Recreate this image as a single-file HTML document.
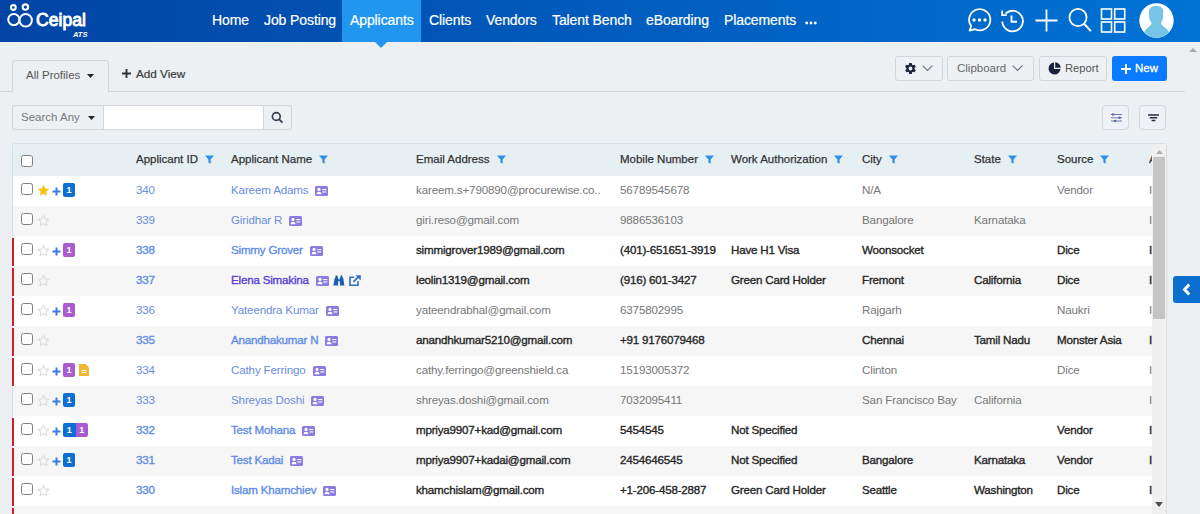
<!DOCTYPE html>
<html><head><meta charset="utf-8">
<style>
*{box-sizing:border-box;margin:0;padding:0}
html,body{width:1200px;height:514px;overflow:hidden}
body{position:relative;background:#ecf0f3;font-family:"Liberation Sans",sans-serif;color:#333}
.abs{position:absolute}
#nav{position:absolute;left:0;top:0;width:1200px;height:42px;background:linear-gradient(90deg,#0244a4 0%,#0073d5 100%)}
#nav .it{position:absolute;top:0;height:42px;line-height:40px;color:#fff;font-size:14px;letter-spacing:-0.1px;-webkit-text-stroke:0.2px currentColor;white-space:nowrap}
#nav .act{position:absolute;left:342px;top:0;width:79px;height:42px;background:#2196ef}
#nav .arrow{position:absolute;left:375px;top:42px;width:0;height:0;border-left:6px solid transparent;border-right:6px solid transparent;border-top:6px solid #2196ef}
.tab{position:absolute;left:12px;top:60px;width:97px;height:32px;border:1px solid #d3d7db;border-bottom:none;border-radius:4px 4px 0 0;background:#ecf0f3}
.hline{position:absolute;left:0;top:91px;width:1185px;height:1px;background:#d3d7db}
.btn{position:absolute;top:56px;height:25px;border:1px solid #d3d6da;border-radius:3px;background:#eef1f4;font-size:12px;color:#555;white-space:nowrap}
.ibtn{position:absolute;top:105px;width:27px;height:25px;border:1px solid #d3d6da;border-radius:4px;background:#eef1f5}
.search{position:absolute;left:12px;top:105px;width:280px;height:25px;border:1px solid #d3d6da;border-radius:3px;background:#fff}
#tbl{position:absolute;left:12px;top:143px;width:1155px;height:380px;border:1px solid #d5dfe8;border-radius:3px;background:#fff}
#thead{position:absolute;left:0;top:0;width:1153px;height:32px;background:#e6f0f3;border-radius:3px 3px 0 0}
.hc{position:absolute;top:0;height:32px;line-height:33px;font-size:11.5px;font-weight:400;color:#333;-webkit-text-stroke:0.25px currentColor;white-space:nowrap}
.hc .filt{position:absolute;right:-16px;top:12px}
.row{position:absolute;left:0;width:1166px;height:30px}
.row::before{content:"";position:absolute;left:13px;top:0;right:0;bottom:0;background:var(--bg)}
.redbar{position:absolute;left:12px;top:2px;width:2px;height:28px;background:#d02029}
.cb{position:absolute;left:21px;top:7px;width:12px;height:12px;border:1.5px solid #808080;border-radius:2.5px;background:#fff}
.star{position:absolute;left:36.5px;top:8px;width:13px;height:13px}
.star svg,.plus svg,.doc svg,.ic svg{display:block}
.plus{position:absolute;left:52px;top:10.5px}
.badge{position:absolute;top:7px;width:12px;height:14px;border-radius:2px;color:#fff;font-size:9px;font-weight:700;text-align:center;line-height:14px}
.badge2{position:absolute;left:63px;top:7px;height:14px;border-radius:2px;overflow:hidden;display:flex}
.badge2 span{display:block;width:12.5px;height:14px;color:#fff;font-size:9px;font-weight:700;text-align:center;line-height:14px}
.doc{position:absolute;top:8px}
.c{position:absolute;top:0;height:30px;line-height:28px;white-space:nowrap}
.ic{display:inline-block;vertical-align:middle;margin-left:7px;position:relative;top:0px}
.rl .c{font-size:11.6px;color:#777;letter-spacing:-0.15px}
.rl .id,.rl .name{color:#6a8de2}
.rd .c{font-size:11.6px;font-weight:400;color:#262626;letter-spacing:-0.2px;-webkit-text-stroke:0.35px currentColor}
.rd .id,.rd .name{color:#5f8ce8}
.rd .name.vis{color:#5a3ed8}
.extra{width:3px;overflow:hidden}
#vscroll{position:absolute;left:1152px;top:144px;width:14px;height:370px;background:#f1f1f1}
</style></head><body>

<div id="nav">
  <svg class="abs" style="left:6px;top:3px" width="90" height="36" viewBox="0 0 90 36">
    <circle cx="7.3" cy="4.5" r="2.4" fill="none" stroke="#fff" stroke-width="2.1"/>
    <circle cx="19.4" cy="4.1" r="2.7" fill="none" stroke="#fff" stroke-width="2.1"/>
    <circle cx="7.8" cy="16.6" r="5.6" fill="none" stroke="#fff" stroke-width="2"/>
    <circle cx="19.7" cy="17.3" r="6.2" fill="none" stroke="#fff" stroke-width="2"/>
    <text x="30" y="22.8" font-family="Liberation Sans" font-weight="400" font-size="17.6" fill="#fff" stroke="#fff" stroke-width="0.9">Ceipal</text>
    <text x="67" y="33.5" font-family="Liberation Sans" font-weight="700" font-style="italic" font-size="7.5" fill="#fff">ATS</text>
  </svg>
  <div class="act"></div>
  <div class="it" style="left:212px">Home</div>
  <div class="it" style="left:264px">Job Posting</div>
  <div class="it" style="left:350px">Applicants</div>
  <div class="it" style="left:429px">Clients</div>
  <div class="it" style="left:486px">Vendors</div>
  <div class="it" style="left:552px">Talent Bench</div>
  <div class="it" style="left:646px">eBoarding</div>
  <div class="it" style="left:724px">Placements</div>
  <svg class="abs" style="left:805px;top:21px" width="12" height="4" viewBox="0 0 12 4"><circle cx="1.7" cy="2" r="1.4" fill="#fff"/><circle cx="6" cy="2" r="1.4" fill="#fff"/><circle cx="10.3" cy="2" r="1.4" fill="#fff"/></svg>
  <!-- right icons -->
  <svg class="abs" style="left:966px;top:7px" width="27" height="27" viewBox="0 0 27 27">
    <path d="M3.6 23.6l1.6-4.6A10.6 10.6 0 1 1 9 22.2z" fill="none" stroke="#fff" stroke-width="1.8" stroke-linejoin="round"/>
    <circle cx="8" cy="13" r="1.7" fill="#fff"/><circle cx="13.5" cy="13" r="1.7" fill="#fff"/><circle cx="19" cy="13" r="1.7" fill="#fff"/>
  </svg>
  <svg class="abs" style="left:999px;top:7px" width="27" height="27" viewBox="0 0 27 27">
    <path d="M3.3 14.5A10.3 10.3 0 1 0 6.6 6.5" fill="none" stroke="#fff" stroke-width="1.8"/>
    <path d="M3.2 3.5v4.6h4.6" fill="none" stroke="#fff" stroke-width="1.8"/>
    <path d="M12.5 8.5v6.2h5.5" fill="none" stroke="#fff" stroke-width="1.9"/>
  </svg>
  <svg class="abs" style="left:1035px;top:9px" width="23" height="23" viewBox="0 0 23 23"><path d="M11.5 0.5v22M0.5 11.5h22" stroke="#fff" stroke-width="1.8"/></svg>
  <svg class="abs" style="left:1068px;top:7px" width="25" height="26" viewBox="0 0 25 26"><circle cx="10" cy="10.5" r="8.6" fill="none" stroke="#fff" stroke-width="1.8"/><path d="M16.3 17l6.6 7.2" stroke="#fff" stroke-width="1.9"/></svg>
  <svg class="abs" style="left:1100px;top:8px" width="27" height="26" viewBox="0 0 27 26">
    <rect x="1.5" y="1" width="10" height="10" fill="none" stroke="#fff" stroke-width="1.6"/>
    <rect x="14.7" y="1" width="10" height="10" fill="none" stroke="#fff" stroke-width="1.6"/>
    <rect x="1.5" y="14" width="10" height="10" fill="none" stroke="#fff" stroke-width="1.6"/>
    <rect x="14.7" y="14" width="10" height="10" fill="none" stroke="#fff" stroke-width="1.6"/>
  </svg>
  <svg class="abs" style="left:1139px;top:3px" width="35" height="35" viewBox="0 0 35 35">
    <defs><clipPath id="av"><circle cx="17.5" cy="17.5" r="17.2"/></clipPath></defs>
    <circle cx="17.5" cy="17.5" r="17.2" fill="#fff"/>
    <g clip-path="url(#av)" fill="#76c5e6">
      <path d="M10 8.5C10 4.8 12.8 3 17 3S24.3 4.8 24.3 8.5L24 15C23.8 17 22.8 18.5 22 19.8C22.4 22.4 24.8 23.6 26.6 25C28.8 26.8 30.5 29.5 31.5 35H3.5C4.5 29.5 6.2 26.8 8.4 25C10.2 23.6 12.4 22.4 12.6 19.8C11.8 18.5 10.4 17 10.2 15Z"/>
    </g>
  </svg>
</div>
<div class="arrow" style="position:absolute;left:375px;top:42px;width:0;height:0;border-left:6px solid transparent;border-right:6px solid transparent;border-top:6px solid #2196ef"></div>

<!-- toolbar -->
<div class="hline"></div>
<div class="tab"></div>
<div class="abs" style="left:26px;top:60px;height:31px;line-height:31px;font-size:11.5px;color:#555">All Profiles</div>
<svg class="abs" style="left:87px;top:74px" width="7" height="4" viewBox="0 0 7 4"><path d="M0 0h7L3.5 4z" fill="#222"/></svg>
<svg class="abs" style="left:122px;top:69px" width="9" height="9" viewBox="0 0 9 9"><path d="M4.5 0v9M0 4.5h9" stroke="#333" stroke-width="1.9"/></svg>
<div class="abs" style="left:136px;top:58px;height:31px;line-height:31px;font-size:11.7px;color:#3a3a3a;-webkit-text-stroke:0.2px currentColor">Add View</div>

<div class="btn" style="left:895px;width:48px">
  <svg class="abs" style="left:8px;top:4.5px" width="13" height="13" viewBox="0 0 24 24"><path fill="#1c2340" d="M19.4 13c.04-.33.06-.66.06-1s-.02-.67-.06-1l2.1-1.6c.2-.15.25-.42.12-.64l-2-3.46c-.12-.22-.39-.3-.61-.22l-2.5 1c-.52-.4-1.08-.73-1.7-.98L14.4 2.4A.49.49 0 0 0 13.9 2h-4c-.25 0-.46.18-.49.42L9 5.1c-.61.25-1.17.59-1.7.98l-2.5-1a.5.5 0 0 0-.6.22l-2 3.46c-.13.22-.07.49.12.64L4.5 11c-.04.33-.07.67-.07 1s.03.67.07 1l-2.1 1.6a.5.5 0 0 0-.12.64l2 3.46c.12.22.39.3.6.22l2.5-1c.52.4 1.08.73 1.7.98l.38 2.65c.03.24.24.42.49.42h4c.25 0 .46-.18.49-.42l.38-2.65c.61-.25 1.17-.58 1.7-.98l2.5 1c.22.08.49 0 .61-.22l2-3.46a.5.5 0 0 0-.12-.64zM12 15.5a3.5 3.5 0 1 1 0-7 3.5 3.5 0 0 1 0 7z"/></svg>
  <svg class="abs" style="left:26px;top:8px" width="11" height="7" viewBox="0 0 11 7"><path d="M0.7 0.7L5.5 5.5 10.3 0.7" fill="none" stroke="#6b7280" stroke-width="1.2"/></svg>
</div>
<div class="btn" style="left:947px;width:87px">
  <div class="abs" style="left:9px;top:0;line-height:23px;font-size:11.5px;color:#666">Clipboard</div>
  <svg class="abs" style="left:64px;top:8px" width="11" height="7" viewBox="0 0 11 7"><path d="M0.7 0.7L5.5 5.5 10.3 0.7" fill="none" stroke="#6b7280" stroke-width="1.2"/></svg>
</div>
<div class="btn" style="left:1039px;width:68px">
  <svg class="abs" style="left:8px;top:5px" width="13" height="13" viewBox="0 0 13 13"><path d="M6 0.5A6 6 0 1 0 12.5 7H6z" fill="#1c2340"/><path d="M7.2 0.3v5.5h5.5A5.6 5.6 0 0 0 7.2 0.3z" fill="#1c2340"/></svg>
  <div class="abs" style="left:25px;top:0;line-height:23px;font-size:11.2px;color:#555">Report</div>
</div>
<div class="abs" style="left:1112px;top:56px;width:55px;height:25px;border-radius:3px;background:#0a7aff">
  <svg class="abs" style="left:9px;top:8px" width="10" height="10" viewBox="0 0 10 10"><path d="M5 0v10M0 5h10" stroke="#fff" stroke-width="2"/></svg>
  <div class="abs" style="left:23px;top:0;line-height:25px;font-size:11.5px;color:#fff;-webkit-text-stroke:0.3px currentColor">New</div>
</div>
<svg class="abs" style="left:1189px;top:48px" width="8" height="4" viewBox="0 0 8 4"><path d="M0 4h8L4 0z" fill="#a8a8a8"/></svg>

<!-- search -->
<div class="search"></div>
<div class="abs" style="left:12px;top:105px;width:92px;height:25px;border:1px solid #d3d6da;border-radius:3px 0 0 3px;background:#eef1f4"></div>
<div class="abs" style="left:21px;top:105px;line-height:25px;font-size:11.5px;color:#777">Search Any</div>
<svg class="abs" style="left:88px;top:116px" width="7" height="4" viewBox="0 0 7 4"><path d="M0 0h7L3.5 4z" fill="#222"/></svg>
<div class="abs" style="left:263px;top:105px;width:29px;height:25px;border:1px solid #d3d6da;border-radius:0 3px 3px 0;background:#eef1f4"></div>
<svg class="abs" style="left:271px;top:111px" width="13" height="13" viewBox="0 0 13 13"><circle cx="5.3" cy="5.5" r="3.9" fill="none" stroke="#3a3f55" stroke-width="1.7"/><path d="M8.2 8.4l3.3 3.3" stroke="#3a3f55" stroke-width="1.8"/></svg>

<div class="ibtn" style="left:1102px">
  <svg class="abs" style="left:8px;top:7px" width="11" height="10" viewBox="0 0 11 10"><path d="M0 1.5h11M0 4.8h11M0 8h11" stroke="#5d6bb0" stroke-width="0.9"/><circle cx="2" cy="1.5" r="1.3" fill="#5d6bb0"/><circle cx="8.5" cy="4.8" r="1.3" fill="#5d6bb0"/><circle cx="4" cy="8" r="1.3" fill="#5d6bb0"/></svg>
</div>
<div class="ibtn" style="left:1139px">
  <svg class="abs" style="left:8px;top:8px" width="11" height="8" viewBox="0 0 11 8"><path d="M0 1h11M1.8 3.8h7.4M3.6 6.6h3.8" stroke="#262840" stroke-width="1.5"/></svg>
</div>

<!-- table -->
<div id="tbl">
  <div id="thead">
    <div class="cb" style="left:8px;top:11px"></div>
    <div style="position:absolute;left:-13px;top:-1px"><div class="hc" style="left:136px">Applicant ID<svg class="filt" width="9" height="9" viewBox="0 0 9 9"><path d="M0 0.5h9L5.6 4.6V8.8L3.4 7.6V4.6z" fill="#2d8ee8"/></svg></div><div class="hc" style="left:231px">Applicant Name<svg class="filt" width="9" height="9" viewBox="0 0 9 9"><path d="M0 0.5h9L5.6 4.6V8.8L3.4 7.6V4.6z" fill="#2d8ee8"/></svg></div><div class="hc" style="left:416px">Email Address<svg class="filt" width="9" height="9" viewBox="0 0 9 9"><path d="M0 0.5h9L5.6 4.6V8.8L3.4 7.6V4.6z" fill="#2d8ee8"/></svg></div><div class="hc" style="left:620px">Mobile Number<svg class="filt" width="9" height="9" viewBox="0 0 9 9"><path d="M0 0.5h9L5.6 4.6V8.8L3.4 7.6V4.6z" fill="#2d8ee8"/></svg></div><div class="hc" style="left:731px">Work Authorization<svg class="filt" width="9" height="9" viewBox="0 0 9 9"><path d="M0 0.5h9L5.6 4.6V8.8L3.4 7.6V4.6z" fill="#2d8ee8"/></svg></div><div class="hc" style="left:862px">City<svg class="filt" width="9" height="9" viewBox="0 0 9 9"><path d="M0 0.5h9L5.6 4.6V8.8L3.4 7.6V4.6z" fill="#2d8ee8"/></svg></div><div class="hc" style="left:974px">State<svg class="filt" width="9" height="9" viewBox="0 0 9 9"><path d="M0 0.5h9L5.6 4.6V8.8L3.4 7.6V4.6z" fill="#2d8ee8"/></svg></div><div class="hc" style="left:1057px">Source<svg class="filt" width="9" height="9" viewBox="0 0 9 9"><path d="M0 0.5h9L5.6 4.6V8.8L3.4 7.6V4.6z" fill="#2d8ee8"/></svg></div><div class="hc" style="left:1149px;width:3px;overflow:hidden">A</div></div>
  </div>
  <div style="position:absolute;left:-13px;top:-144px;width:1167px;height:700px">
  <div class="row rl" style="top:176px;--bg:#ffffff"><div class="cb"></div><div class="star"><svg width="13" height="13" viewBox="0 0 24 24"><path d="M12 1.5l3.2 6.9 7.4.8-5.5 5 1.5 7.3L12 17.8 5.4 21.5l1.5-7.3-5.5-5 7.4-.8z" fill="#f6c416"/></svg></div><div class="plus"><svg width="9" height="9" viewBox="0 0 9 9"><path d="M4.5 0.5v8M0.5 4.5h8" stroke="#3b7be0" stroke-width="2"/></svg></div><div class="badge" style="left:63px;background:#0b6fd4">1</div><div class="c id" style="left:136px">340</div><div class="c name" style="left:231px">Kareem Adams<span class="ic"><svg width="13" height="10" viewBox="0 0 13 10"><rect x="0" y="0" width="13" height="10" rx="1.5" fill="#8a7be2"/><circle cx="4" cy="3.4" r="1.6" fill="#fff"/><path d="M1.6 8.2c0-1.6 1.1-2.4 2.4-2.4s2.4.8 2.4 2.4z" fill="#fff"/><rect x="7.3" y="3" width="4" height="1.1" fill="#fff"/><rect x="7.3" y="5.4" width="4" height="1.1" fill="#fff"/></svg></span></div><div class="c t" style="left:416px">kareem.s+790890@procurewise.co..</div><div class="c t" style="left:620px">56789545678</div><div class="c t" style="left:862px">N/A</div><div class="c t" style="left:1057px">Vendor</div><div class="c t extra" style="left:1149px">I</div></div>
<div class="row rl" style="top:206px;--bg:#f6f6f6"><div class="cb"></div><div class="star"><svg width="13" height="13" viewBox="0 0 24 24"><path d="M12 2.5l3 6.5 7 .8-5.2 4.8 1.4 6.9L12 18 5.8 21.5l1.4-6.9L2 9.8l7-.8z" fill="none" stroke="#dcdcdc" stroke-width="2" stroke-linejoin="round"/></svg></div><div class="c id" style="left:136px">339</div><div class="c name" style="left:231px">Giridhar R<span class="ic"><svg width="13" height="10" viewBox="0 0 13 10"><rect x="0" y="0" width="13" height="10" rx="1.5" fill="#8a7be2"/><circle cx="4" cy="3.4" r="1.6" fill="#fff"/><path d="M1.6 8.2c0-1.6 1.1-2.4 2.4-2.4s2.4.8 2.4 2.4z" fill="#fff"/><rect x="7.3" y="3" width="4" height="1.1" fill="#fff"/><rect x="7.3" y="5.4" width="4" height="1.1" fill="#fff"/></svg></span></div><div class="c t" style="left:416px">giri.reso@gmail.com</div><div class="c t" style="left:620px">9886536103</div><div class="c t" style="left:862px">Bangalore</div><div class="c t" style="left:974px">Karnataka</div><div class="c t extra" style="left:1149px">I</div></div>
<div class="row rd" style="top:236px;--bg:#ffffff"><div class="redbar"></div><div class="cb"></div><div class="star"><svg width="13" height="13" viewBox="0 0 24 24"><path d="M12 2.5l3 6.5 7 .8-5.2 4.8 1.4 6.9L12 18 5.8 21.5l1.4-6.9L2 9.8l7-.8z" fill="none" stroke="#dcdcdc" stroke-width="2" stroke-linejoin="round"/></svg></div><div class="plus"><svg width="9" height="9" viewBox="0 0 9 9"><path d="M4.5 0.5v8M0.5 4.5h8" stroke="#3b7be0" stroke-width="2"/></svg></div><div class="badge" style="left:63px;background:#a95bd0">1</div><div class="c id" style="left:136px">338</div><div class="c name" style="left:231px">Simmy Grover<span class="ic"><svg width="13" height="10" viewBox="0 0 13 10"><rect x="0" y="0" width="13" height="10" rx="1.5" fill="#8a7be2"/><circle cx="4" cy="3.4" r="1.6" fill="#fff"/><path d="M1.6 8.2c0-1.6 1.1-2.4 2.4-2.4s2.4.8 2.4 2.4z" fill="#fff"/><rect x="7.3" y="3" width="4" height="1.1" fill="#fff"/><rect x="7.3" y="5.4" width="4" height="1.1" fill="#fff"/></svg></span></div><div class="c t" style="left:416px">simmigrover1989@gmail.com</div><div class="c t" style="left:620px">(401)-651651-3919</div><div class="c t" style="left:731px">Have H1 Visa</div><div class="c t" style="left:862px">Woonsocket</div><div class="c t" style="left:1057px">Dice</div><div class="c t extra" style="left:1149px">I</div></div>
<div class="row rd" style="top:266px;--bg:#f6f6f6"><div class="redbar"></div><div class="cb"></div><div class="star"><svg width="13" height="13" viewBox="0 0 24 24"><path d="M12 2.5l3 6.5 7 .8-5.2 4.8 1.4 6.9L12 18 5.8 21.5l1.4-6.9L2 9.8l7-.8z" fill="none" stroke="#dcdcdc" stroke-width="2" stroke-linejoin="round"/></svg></div><div class="c id" style="left:136px">337</div><div class="c name vis" style="left:231px">Elena Simakina<span class="ic"><svg width="13" height="10" viewBox="0 0 13 10"><rect x="0" y="0" width="13" height="10" rx="1.5" fill="#8a7be2"/><circle cx="4" cy="3.4" r="1.6" fill="#fff"/><path d="M1.6 8.2c0-1.6 1.1-2.4 2.4-2.4s2.4.8 2.4 2.4z" fill="#fff"/><rect x="7.3" y="3" width="4" height="1.1" fill="#fff"/><rect x="7.3" y="5.4" width="4" height="1.1" fill="#fff"/></svg></span><span class="ic" style="margin-left:4px"><svg width="12" height="11" viewBox="0 0 12 11"><path d="M2.6 0.6h1.9v1.6l0.6 0.4v7.9H0.4L1.6 3.4l0.8-0.8z M7.5 0.6h1.9v1.6l0.8 0.8 1.2 7.4H6.9V2.6l0.6-0.4z M5 4.2h2v2H5z" fill="#1b5fb4"/></svg></span><span class="ic" style="margin-left:4px"><svg width="12" height="11" viewBox="0 0 12 11"><path d="M5.2 2.3H1v7.9h7.9V6.2" fill="none" stroke="#2f6cc4" stroke-width="1.6"/><path d="M4.4 6.8L10 1.2" fill="none" stroke="#2f6cc4" stroke-width="1.7"/><path d="M6.6 0.2h5.2v5.2z" fill="#2f6cc4"/></svg></span></div><div class="c t" style="left:416px">leolin1319@gmail.com</div><div class="c t" style="left:620px">(916) 601-3427</div><div class="c t" style="left:731px">Green Card Holder</div><div class="c t" style="left:862px">Fremont</div><div class="c t" style="left:974px">California</div><div class="c t" style="left:1057px">Dice</div><div class="c t extra" style="left:1149px">I</div></div>
<div class="row rl" style="top:296px;--bg:#ffffff"><div class="redbar"></div><div class="cb"></div><div class="star"><svg width="13" height="13" viewBox="0 0 24 24"><path d="M12 2.5l3 6.5 7 .8-5.2 4.8 1.4 6.9L12 18 5.8 21.5l1.4-6.9L2 9.8l7-.8z" fill="none" stroke="#dcdcdc" stroke-width="2" stroke-linejoin="round"/></svg></div><div class="plus"><svg width="9" height="9" viewBox="0 0 9 9"><path d="M4.5 0.5v8M0.5 4.5h8" stroke="#3b7be0" stroke-width="2"/></svg></div><div class="badge" style="left:63px;background:#a95bd0">1</div><div class="c id" style="left:136px">336</div><div class="c name" style="left:231px">Yateendra Kumar<span class="ic"><svg width="13" height="10" viewBox="0 0 13 10"><rect x="0" y="0" width="13" height="10" rx="1.5" fill="#8a7be2"/><circle cx="4" cy="3.4" r="1.6" fill="#fff"/><path d="M1.6 8.2c0-1.6 1.1-2.4 2.4-2.4s2.4.8 2.4 2.4z" fill="#fff"/><rect x="7.3" y="3" width="4" height="1.1" fill="#fff"/><rect x="7.3" y="5.4" width="4" height="1.1" fill="#fff"/></svg></span></div><div class="c t" style="left:416px">yateendrabhal@gmail.com</div><div class="c t" style="left:620px">6375802995</div><div class="c t" style="left:862px">Rajgarh</div><div class="c t" style="left:1057px">Naukri</div><div class="c t extra" style="left:1149px">I</div></div>
<div class="row rd" style="top:326px;--bg:#f6f6f6"><div class="redbar"></div><div class="cb"></div><div class="star"><svg width="13" height="13" viewBox="0 0 24 24"><path d="M12 2.5l3 6.5 7 .8-5.2 4.8 1.4 6.9L12 18 5.8 21.5l1.4-6.9L2 9.8l7-.8z" fill="none" stroke="#dcdcdc" stroke-width="2" stroke-linejoin="round"/></svg></div><div class="c id" style="left:136px">335</div><div class="c name" style="left:231px">Anandhakumar N<span class="ic"><svg width="13" height="10" viewBox="0 0 13 10"><rect x="0" y="0" width="13" height="10" rx="1.5" fill="#8a7be2"/><circle cx="4" cy="3.4" r="1.6" fill="#fff"/><path d="M1.6 8.2c0-1.6 1.1-2.4 2.4-2.4s2.4.8 2.4 2.4z" fill="#fff"/><rect x="7.3" y="3" width="4" height="1.1" fill="#fff"/><rect x="7.3" y="5.4" width="4" height="1.1" fill="#fff"/></svg></span></div><div class="c t" style="left:416px">anandhkumar5210@gmail.com</div><div class="c t" style="left:620px">+91 9176079468</div><div class="c t" style="left:862px">Chennai</div><div class="c t" style="left:974px">Tamil Nadu</div><div class="c t" style="left:1057px">Monster Asia</div><div class="c t extra" style="left:1149px">I</div></div>
<div class="row rl" style="top:356px;--bg:#ffffff"><div class="redbar"></div><div class="cb"></div><div class="star"><svg width="13" height="13" viewBox="0 0 24 24"><path d="M12 2.5l3 6.5 7 .8-5.2 4.8 1.4 6.9L12 18 5.8 21.5l1.4-6.9L2 9.8l7-.8z" fill="none" stroke="#dcdcdc" stroke-width="2" stroke-linejoin="round"/></svg></div><div class="plus"><svg width="9" height="9" viewBox="0 0 9 9"><path d="M4.5 0.5v8M0.5 4.5h8" stroke="#3b7be0" stroke-width="2"/></svg></div><div class="badge" style="left:63px;background:#a95bd0">1</div><div class="doc" style="left:79px"><svg width="10" height="12" viewBox="0 0 10 12"><path d="M0 0h6.5L10 3.5V12H0z" fill="#f2b630"/><rect x="2.5" y="6" width="5" height="1" fill="#fff"/><rect x="2.5" y="8" width="5" height="1" fill="#fff"/></svg></div><div class="c id" style="left:136px">334</div><div class="c name" style="left:231px">Cathy Ferringo<span class="ic"><svg width="13" height="10" viewBox="0 0 13 10"><rect x="0" y="0" width="13" height="10" rx="1.5" fill="#8a7be2"/><circle cx="4" cy="3.4" r="1.6" fill="#fff"/><path d="M1.6 8.2c0-1.6 1.1-2.4 2.4-2.4s2.4.8 2.4 2.4z" fill="#fff"/><rect x="7.3" y="3" width="4" height="1.1" fill="#fff"/><rect x="7.3" y="5.4" width="4" height="1.1" fill="#fff"/></svg></span></div><div class="c t" style="left:416px">cathy.ferringo@greenshield.ca</div><div class="c t" style="left:620px">15193005372</div><div class="c t" style="left:862px">Clinton</div><div class="c t" style="left:1057px">Dice</div><div class="c t extra" style="left:1149px">I</div></div>
<div class="row rl" style="top:386px;--bg:#f6f6f6"><div class="cb"></div><div class="star"><svg width="13" height="13" viewBox="0 0 24 24"><path d="M12 2.5l3 6.5 7 .8-5.2 4.8 1.4 6.9L12 18 5.8 21.5l1.4-6.9L2 9.8l7-.8z" fill="none" stroke="#dcdcdc" stroke-width="2" stroke-linejoin="round"/></svg></div><div class="plus"><svg width="9" height="9" viewBox="0 0 9 9"><path d="M4.5 0.5v8M0.5 4.5h8" stroke="#3b7be0" stroke-width="2"/></svg></div><div class="badge" style="left:63px;background:#0b6fd4">1</div><div class="c id" style="left:136px">333</div><div class="c name" style="left:231px">Shreyas Doshi<span class="ic"><svg width="13" height="10" viewBox="0 0 13 10"><rect x="0" y="0" width="13" height="10" rx="1.5" fill="#8a7be2"/><circle cx="4" cy="3.4" r="1.6" fill="#fff"/><path d="M1.6 8.2c0-1.6 1.1-2.4 2.4-2.4s2.4.8 2.4 2.4z" fill="#fff"/><rect x="7.3" y="3" width="4" height="1.1" fill="#fff"/><rect x="7.3" y="5.4" width="4" height="1.1" fill="#fff"/></svg></span></div><div class="c t" style="left:416px">shreyas.doshi@gmail.com</div><div class="c t" style="left:620px">7032095411</div><div class="c t" style="left:862px">San Francisco Bay</div><div class="c t" style="left:974px">California</div><div class="c t extra" style="left:1149px">I</div></div>
<div class="row rd" style="top:416px;--bg:#ffffff"><div class="redbar"></div><div class="cb"></div><div class="star"><svg width="13" height="13" viewBox="0 0 24 24"><path d="M12 2.5l3 6.5 7 .8-5.2 4.8 1.4 6.9L12 18 5.8 21.5l1.4-6.9L2 9.8l7-.8z" fill="none" stroke="#dcdcdc" stroke-width="2" stroke-linejoin="round"/></svg></div><div class="plus"><svg width="9" height="9" viewBox="0 0 9 9"><path d="M4.5 0.5v8M0.5 4.5h8" stroke="#3b7be0" stroke-width="2"/></svg></div><div class="badge2"><span style="background:#0b6fd4">1</span><span style="background:#a95bd0">1</span></div><div class="c id" style="left:136px">332</div><div class="c name" style="left:231px">Test Mohana<span class="ic"><svg width="13" height="10" viewBox="0 0 13 10"><rect x="0" y="0" width="13" height="10" rx="1.5" fill="#8a7be2"/><circle cx="4" cy="3.4" r="1.6" fill="#fff"/><path d="M1.6 8.2c0-1.6 1.1-2.4 2.4-2.4s2.4.8 2.4 2.4z" fill="#fff"/><rect x="7.3" y="3" width="4" height="1.1" fill="#fff"/><rect x="7.3" y="5.4" width="4" height="1.1" fill="#fff"/></svg></span></div><div class="c t" style="left:416px">mpriya9907+kad@gmail.com</div><div class="c t" style="left:620px">5454545</div><div class="c t" style="left:731px">Not Specified</div><div class="c t" style="left:1057px">Vendor</div><div class="c t extra" style="left:1149px">I</div></div>
<div class="row rd" style="top:446px;--bg:#f6f6f6"><div class="redbar"></div><div class="cb"></div><div class="star"><svg width="13" height="13" viewBox="0 0 24 24"><path d="M12 2.5l3 6.5 7 .8-5.2 4.8 1.4 6.9L12 18 5.8 21.5l1.4-6.9L2 9.8l7-.8z" fill="none" stroke="#dcdcdc" stroke-width="2" stroke-linejoin="round"/></svg></div><div class="plus"><svg width="9" height="9" viewBox="0 0 9 9"><path d="M4.5 0.5v8M0.5 4.5h8" stroke="#3b7be0" stroke-width="2"/></svg></div><div class="badge" style="left:63px;background:#0b6fd4">1</div><div class="c id" style="left:136px">331</div><div class="c name" style="left:231px">Test Kadai<span class="ic"><svg width="13" height="10" viewBox="0 0 13 10"><rect x="0" y="0" width="13" height="10" rx="1.5" fill="#8a7be2"/><circle cx="4" cy="3.4" r="1.6" fill="#fff"/><path d="M1.6 8.2c0-1.6 1.1-2.4 2.4-2.4s2.4.8 2.4 2.4z" fill="#fff"/><rect x="7.3" y="3" width="4" height="1.1" fill="#fff"/><rect x="7.3" y="5.4" width="4" height="1.1" fill="#fff"/></svg></span></div><div class="c t" style="left:416px">mpriya9907+kadai@gmail.com</div><div class="c t" style="left:620px">2454646545</div><div class="c t" style="left:731px">Not Specified</div><div class="c t" style="left:862px">Bangalore</div><div class="c t" style="left:974px">Karnataka</div><div class="c t" style="left:1057px">Vendor</div><div class="c t extra" style="left:1149px">I</div></div>
<div class="row rd" style="top:476px;--bg:#ffffff"><div class="redbar"></div><div class="cb"></div><div class="star"><svg width="13" height="13" viewBox="0 0 24 24"><path d="M12 2.5l3 6.5 7 .8-5.2 4.8 1.4 6.9L12 18 5.8 21.5l1.4-6.9L2 9.8l7-.8z" fill="none" stroke="#dcdcdc" stroke-width="2" stroke-linejoin="round"/></svg></div><div class="c id" style="left:136px">330</div><div class="c name" style="left:231px">Islam Khamchiev<span class="ic"><svg width="13" height="10" viewBox="0 0 13 10"><rect x="0" y="0" width="13" height="10" rx="1.5" fill="#8a7be2"/><circle cx="4" cy="3.4" r="1.6" fill="#fff"/><path d="M1.6 8.2c0-1.6 1.1-2.4 2.4-2.4s2.4.8 2.4 2.4z" fill="#fff"/><rect x="7.3" y="3" width="4" height="1.1" fill="#fff"/><rect x="7.3" y="5.4" width="4" height="1.1" fill="#fff"/></svg></span></div><div class="c t" style="left:416px">khamchislam@gmail.com</div><div class="c t" style="left:620px">+1-206-458-2887</div><div class="c t" style="left:731px">Green Card Holder</div><div class="c t" style="left:862px">Seattle</div><div class="c t" style="left:974px">Washington</div><div class="c t" style="left:1057px">Dice</div><div class="c t extra" style="left:1149px">I</div></div>
<div class="row rd" style="top:506px;--bg:#f6f6f6"><div class="redbar"></div></div>
  </div>
</div>
<div class="abs" style="left:1152px;top:144px;width:14px;height:370px;background:#f0f0f0"></div>
<div class="abs" style="left:1153px;top:157px;width:12px;height:162px;background:#c5c5c5"></div>
<svg class="abs" style="left:1156px;top:150px" width="7" height="4" viewBox="0 0 7 4"><path d="M0 4h7L3.5 0z" fill="#b0b0b0"/></svg>
<svg class="abs" style="left:1155px;top:502px" width="8" height="5" viewBox="0 0 8 5"><path d="M0 0h8L4 5z" fill="#505050"/></svg>

<!-- side tab -->
<div class="abs" style="left:1173px;top:276px;width:30px;height:27px;border-radius:3px 0 0 3px;background:#0b6fd0">
  <svg class="abs" style="left:9px;top:7px" width="9" height="13" viewBox="0 0 9 13"><path d="M7.2 1.5L2.6 6.5 7.2 11.5" fill="none" stroke="#fff" stroke-width="3"/></svg>
</div>

</body></html>
